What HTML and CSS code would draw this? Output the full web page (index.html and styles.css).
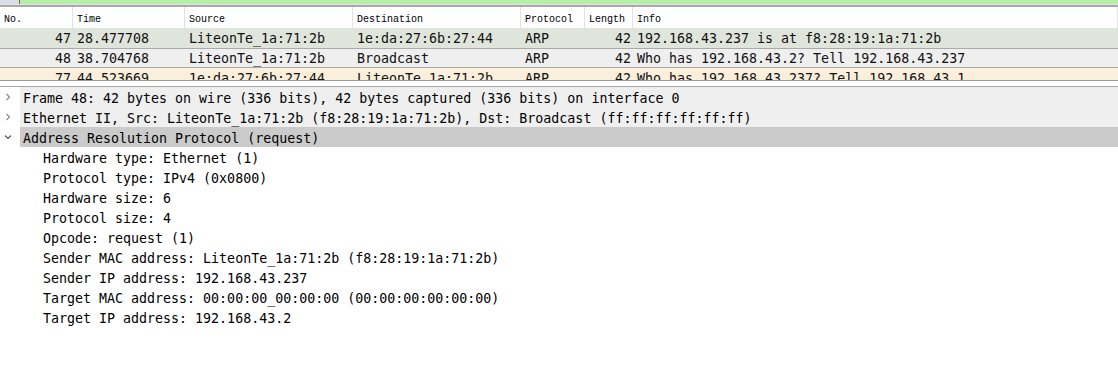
FILE: index.html
```html
<!DOCTYPE html>
<html lang="en">

<head>
  <meta charset="UTF-8">
  <title>Packet Capture</title>
  <link rel="stylesheet" href="styles.css">
</head>

<body>

  <div class="filter-bar">
    <div class="filter-icon"></div>
  </div>

  <div class="packet-list">
    <div class="list-header">
      <div class="col">No.</div>
      <div class="col">Time</div>
      <div class="col">Source</div>
      <div class="col">Destination</div>
      <div class="col">Protocol</div>
      <div class="col">Length</div>
      <div class="col">Info</div>
    </div>

    <div class="list-rows">
      <div class="packet arp-reply">
        <div class="col num">47</div>
        <div class="col">28.477708</div>
        <div class="col">LiteonTe_1a:71:2b</div>
        <div class="col">1e:da:27:6b:27:44</div>
        <div class="col">ARP</div>
        <div class="col num">42</div>
        <div class="col">192.168.43.237 is at f8:28:19:1a:71:2b</div>
      </div>
      <div class="packet selected">
        <div class="col num">48</div>
        <div class="col">38.704768</div>
        <div class="col">LiteonTe_1a:71:2b</div>
        <div class="col">Broadcast</div>
        <div class="col">ARP</div>
        <div class="col num">42</div>
        <div class="col">Who has 192.168.43.2? Tell 192.168.43.237</div>
      </div>
      <div class="packet arp-request">
        <div class="col num">77</div>
        <div class="col">44.523669</div>
        <div class="col">1e:da:27:6b:27:44</div>
        <div class="col">LiteonTe_1a:71:2b</div>
        <div class="col">ARP</div>
        <div class="col num">42</div>
        <div class="col">Who has 192.168.43.237? Tell 192.168.43.1</div>
      </div>
    </div>
  </div>

  <div class="splitter"></div>

  <div class="details">
    <div class="node related">
      <span class="arrow"><svg width="8" height="8" viewBox="0 0 8 8"><path d="M2.5 1 L5.5 4 L2.5 7" fill="none" stroke="#8a8a8a" stroke-width="1.2"/></svg></span>
      <span class="label">Frame 48: 42 bytes on wire (336 bits), 42 bytes captured (336 bits) on interface 0</span>
    </div>
    <div class="node related">
      <span class="arrow"><svg width="8" height="8" viewBox="0 0 8 8"><path d="M2.5 1 L5.5 4 L2.5 7" fill="none" stroke="#8a8a8a" stroke-width="1.2"/></svg></span>
      <span class="label">Ethernet II, Src: LiteonTe_1a:71:2b (f8:28:19:1a:71:2b), Dst: Broadcast (ff:ff:ff:ff:ff:ff)</span>
    </div>
    <div class="node current">
      <span class="arrow"><svg width="8" height="8" viewBox="0 0 8 8"><path d="M1 2.5 L4 5.5 L7 2.5" fill="none" stroke="#555" stroke-width="1.2"/></svg></span>
      <span class="label">Address Resolution Protocol (request)</span>
    </div>
    <div class="node child"><span class="label">Hardware type: Ethernet (1)</span></div>
    <div class="node child"><span class="label">Protocol type: IPv4 (0x0800)</span></div>
    <div class="node child"><span class="label">Hardware size: 6</span></div>
    <div class="node child"><span class="label">Protocol size: 4</span></div>
    <div class="node child"><span class="label">Opcode: request (1)</span></div>
    <div class="node child"><span class="label">Sender MAC address: LiteonTe_1a:71:2b (f8:28:19:1a:71:2b)</span></div>
    <div class="node child"><span class="label">Sender IP address: 192.168.43.237</span></div>
    <div class="node child"><span class="label">Target MAC address: 00:00:00_00:00:00 (00:00:00:00:00:00)</span></div>
    <div class="node child"><span class="label">Target IP address: 192.168.43.2</span></div>
  </div>

</body>

</html>
```
FILE: styles.css
```css
* {
  box-sizing: border-box;
}

body {
  margin: 0;
  background: white;
  font-family: "DejaVu Sans Mono", "Liberation Mono", monospace;
  font-size: 13.3px;
  color: #111;
  overflow: hidden;
}

.filter-bar {
  height: 7px;
  background: #b4f0a6;
  border-top: 4px solid #b4f0a6;
  border-bottom: 2px solid #a8a8a8;
  box-shadow: inset 0 1px 0 #e4e4e4;
  display: flex;
}

.filter-icon {
  width: 20px;
  height: 4px;
  margin-top: -4px;
  background: #d8dde8;
  border-right: 1px solid #6a6a6a;
}

.list-header,
.packet {
  display: grid;
  grid-template-columns: 73px 112px 168px 168px 64px 48px 1fr;
}

.list-header {
  height: 21px;
  font-family: "Liberation Mono", monospace;
  font-size: 10px;
  color: #000;
  background: white;
}

.list-header .col {
  padding: 7px 4px 0;
  border-right: 1px solid #e2e2e2;
}

.list-rows {
  height: 53px;
  overflow: hidden;
  border-bottom: 1px solid #9a9a9a;
}

.packet {
  height: 20px;
  line-height: 20px;
  white-space: nowrap;
}

.packet .col {
  padding-left: 4px;
  padding-top: 1px;
  overflow: hidden;
}

.packet .num {
  text-align: right;
  padding-right: 2px;
}

.arp-reply {
  background: #e0e5dc;
}

.selected {
  background: #efefef;
  border-top: 1px solid #aaaaaa;
  border-bottom: 1px solid #aaaaaa;
  line-height: 18px;
}

.arp-request {
  background: #faefdb;
}

.splitter {
  height: 6px;
  background: white;
  border-bottom: 1px solid #a8a8a8;
}

.details {
  color: #000;
}

.node {
  height: 20px;
  display: flex;
  white-space: nowrap;
}

.arrow {
  width: 20px;
  display: flex;
  align-items: center;
  padding-left: 4px;
}

.label {
  padding-left: 3px;
  padding-top: 2px;
  line-height: 20px;
  flex: 1;
}

.related .label {
  background: #efefef;
}

.current .label {
  background: #cbcbcb;
}

.child .label {
  padding-left: 43px;
}
```
